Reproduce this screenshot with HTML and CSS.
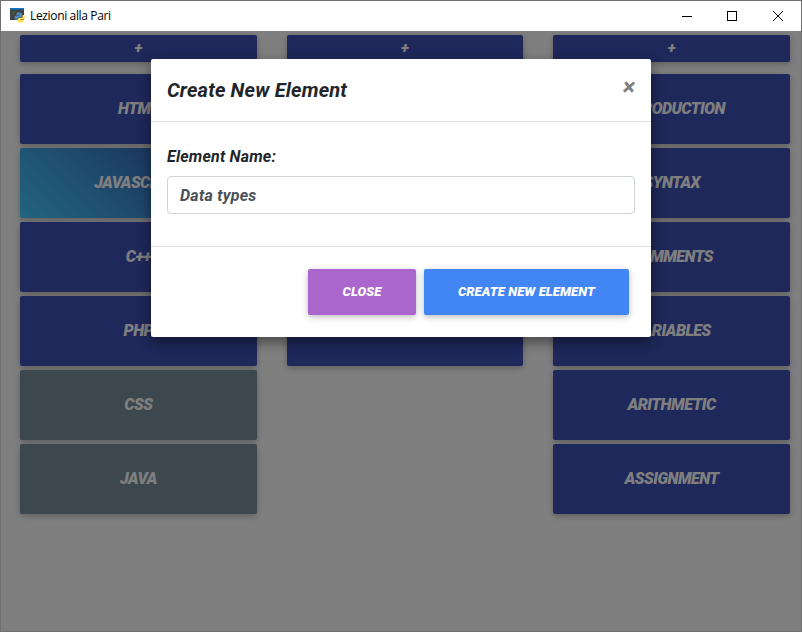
FILE: index.html
```
<!DOCTYPE html>
<html lang="en">
<head>
<meta charset="utf-8">
<title>Lezioni alla Pari</title>
<link rel="stylesheet" href="styles.css">
</head>
<body>
<div class="window">
  <header class="titlebar">
    <svg class="app-icon" width="16" height="16" viewBox="0 0 16 16">
      <rect x="0" y="0" width="14" height="12" fill="#404244"/>
      <rect x="0" y="0" width="14" height="1.500" fill="#0a78d0"/>
      <path d="M2 4.500h3M2 6.500h2" stroke="#4c6450" stroke-width="1"/>
      <path d="M7.500 4.500h3q1.500 0 1.500 1.500v2q0 1.500-1.500 1.500H8.500Q7 9.500 7 11.500H6Q4.500 11.500 4.500 9.500T6 7.500H9.500V7H6.500V6q0-1.500 1-1.500z" fill="#4b8bbe"/>
      <path d="M12.500 7H13.500q1.500 0 1.500 2T13.500 11.500h-3v.500h3v1q0 1.500-2 1.500H9.500q-2 0-2-1.500V11.500Q7.500 10 9 10h2q1.500 0 1.500-1.500z" fill="#ffe05a"/>
    </svg>
    <span class="caption">Lezioni alla Pari</span>
    <svg class="controls" width="104" height="12" viewBox="0 0 104 12" fill="none" stroke="#000" stroke-width="1">
      <path d="M1 6.500h10"/>
      <rect x="46.500" y="1.500" width="9" height="9"/>
      <path d="M92 1l10 10M102 1L92 11"/>
    </svg>
  </header>
  <main class="board">
    <section class="column">
      <button class="tile add">+</button>
      <button class="tile">HTML</button>
      <button class="tile active">JavaScript</button>
      <button class="tile">C++</button>
      <button class="tile">PHP</button>
      <button class="tile muted">CSS</button>
      <button class="tile muted">Java</button>
    </section>
    <section class="column">
      <button class="tile add">+</button>
      <button class="tile"></button>
      <button class="tile"></button>
      <button class="tile"></button>
      <button class="tile"></button>
    </section>
    <section class="column">
      <button class="tile add">+</button>
      <button class="tile">Introduction</button>
      <button class="tile">Syntax</button>
      <button class="tile">Comments</button>
      <button class="tile">Variables</button>
      <button class="tile">Arithmetic</button>
      <button class="tile">Assignment</button>
    </section>
    <div class="backdrop">
      <div class="modal">
        <div class="modal-header">
          <h5 class="modal-title">Create New Element</h5>
          <span class="dismiss">×</span>
        </div>
        <div class="modal-body">
          <label class="label" for="name">Element Name:</label>
          <input class="field" id="name" value="Data types">
        </div>
        <div class="modal-footer">
          <button class="btn close">Close</button>
          <button class="btn create">Create new element</button>
        </div>
      </div>
    </div>
  </main>
</div>
</body>
</html>
```
FILE: styles.css
```
* { box-sizing: border-box; }
body { margin: 0; font-family: Roboto, sans-serif; font-style: italic; font-weight: 700; color: #212529; }
button, input { font: inherit; border: 0; margin: 0; }
.window { width: 802px; height: 632px; border: 1px solid #707070; display: flex; flex-direction: column; overflow: hidden; }
.titlebar { height: 30px; flex: none; background: #fff; display: flex; align-items: center; padding: 0 16px 0 9px; }
.app-icon { flex: none; }
.caption { margin-left: 4px; font: normal 400 12px/16px "Open Sans", sans-serif; color: #000; letter-spacing: -0.35px; }
.controls { margin-left: auto; }
.board { position: relative; flex: 1; background: #fff; display: grid; grid-template-columns: repeat(3, 1fr); gap: 30px; padding: 4px 11px 0 19px; }
.column { display: flex; flex-direction: column; gap: 4px; }
.tile { height: 70px; flex: none; padding: 0 0 2px; border-radius: 2px; background: #3f51b5; color: #fff; font-size: 16px; font-weight: 900; letter-spacing: -0.5px; text-transform: uppercase; text-align: center; box-shadow: 0 2px 5px rgba(0,0,0,.16), 0 2px 10px rgba(0,0,0,.12); }
.add { height: 27px; margin-bottom: 8px; font-size: 15px; letter-spacing: 0; }
.active { background: linear-gradient(45deg, #45cafc, #303f9f); }
.muted { background: #78909c; }
.backdrop { position: absolute; inset: 0; background: rgba(0,0,0,.5); display: flex; justify-content: center; align-items: flex-start; padding-top: 28px; }
.modal { width: 500px; height: 278px; background: #fff; border-radius: 2px; box-shadow: 0 5px 11px rgba(0,0,0,.28), 0 4px 15px rgba(0,0,0,.2); }
.modal-header { height: 63px; display: flex; justify-content: space-between; padding: 16px; border-bottom: 1px solid #dee2e6; }
.modal-title { margin: 0; font-size: 20px; line-height: 30px; font-weight: 700; letter-spacing: 0.17px; }
.dismiss { font-size: 24px; line-height: 24px; color: #808080; }
.modal-body { height: 124px; padding: 23px 16px 0; }
.label { display: block; font-size: 16px; line-height: 24px; margin-bottom: 7px; letter-spacing: 0.2px; }
.field { display: block; width: 100%; height: 38px; padding: 6px 12px; border: 1px solid #ced4da; border-radius: 4px; background: #fff; color: #495057; font-size: 16px; letter-spacing: 0.25px; }
.modal-footer { height: 91px; border-top: 1px solid #dee2e6; display: flex; justify-content: flex-end; align-items: center; gap: 8px; padding-right: 22px; }
.btn { height: 46px; padding: 0 0 2px; border-radius: 2px; color: #fff; font-size: 13px; font-weight: 900; letter-spacing: 0.1px; text-transform: uppercase; box-shadow: 0 2px 5px rgba(0,0,0,.16), 0 2px 10px rgba(0,0,0,.12); }
.close { width: 108px; background: #a6c; }
.create { width: 205px; background: #4285f4; }
```
